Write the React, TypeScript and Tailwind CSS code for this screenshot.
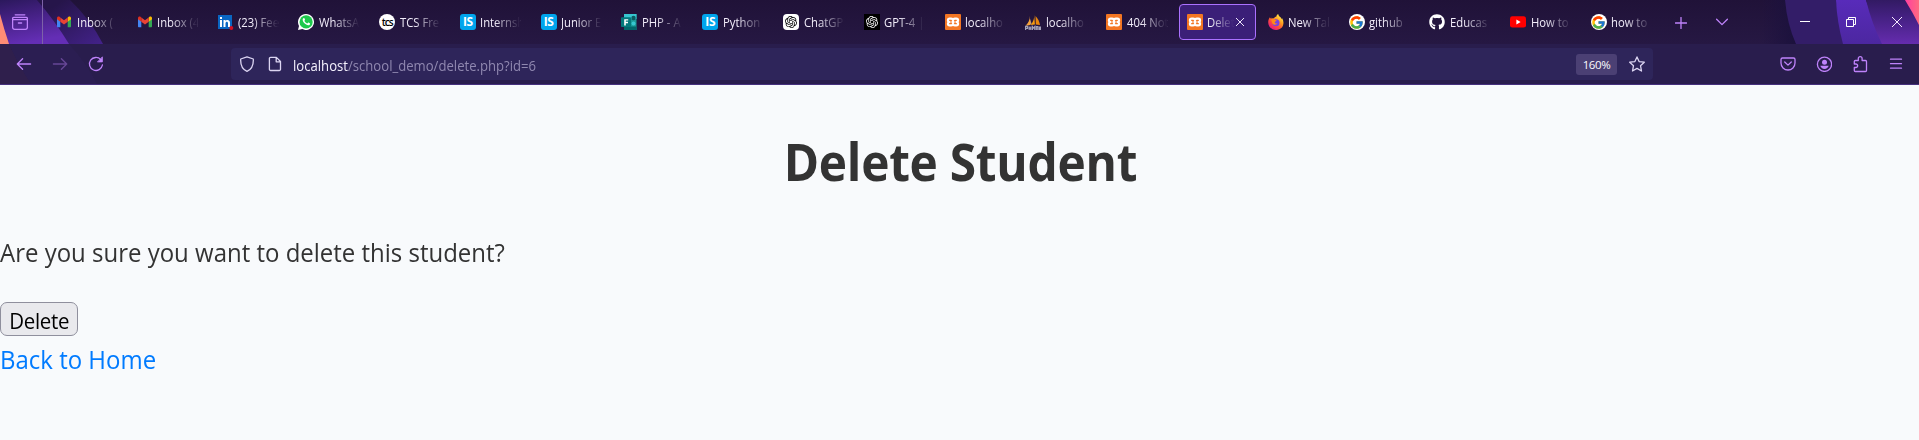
import type { ReactNode } from "react";
import { FcGoogle } from "react-icons/fc";
import { FaGithub } from "react-icons/fa";
import { SiOpenai } from "react-icons/si";

const Gmail = () => (
  <svg viewBox="0 0 16 16" className="size-4">
    <path d="M1 4v8.300c0 .6.4 1 1 1h2.300V6.500L1 4z" fill="#4285f4" />
    <path d="M15 4v8.300c0 .6-.4 1-1 1h-2.300V6.500L15 4z" fill="#34a853" />
    <path d="M11.700 3.500v4.300L15 5.300V4c0-1.300-1.500-2-2.500-1.200z" fill="#fbbc04" />
    <path d="M4.300 3.500 8 6.300l3.700-2.800v4.300L8 10.600 4.300 7.800z" fill="#ea4335" />
    <path d="M1 4v1.300l3.300 2.500V3.500l-.8-.7C2.500 2 1 2.700 1 4z" fill="#e0301e" />
  </svg>
);

const LinkedIn = () => (
  <svg viewBox="0 0 16 16" className="size-4 overflow-visible">
    <path d="M0 1h14v14H0z" fill="#0a66c2" />
    <path d="M2 6h2v7H2zM2 3h2v2H2zM5.500 6h1.900v1c.9-1.600 4.600-1.700 4.600 1.700V13h-2V9.300c0-2.300-2.500-2-2.500 0V13h-2z" fill="#fff" />
    <circle cx="13.300" cy="14" r="2" fill="#d11124" />
  </svg>
);

const WhatsApp = () => (
  <svg viewBox="0 0 16 16" className="size-4">
    <path d="M8 0a8 8 0 1 1-3.700 15.100L0 16l1-4.100A8 8 0 0 1 8 0z" fill="#fff" />
    <circle cx="8.100" cy="7.900" r="6.600" fill="#1ec94c" />
    <path d="M5.500 4.200c.5-.3.900-.1 1.100.4l.4 1c.2.500-.5.900-.6 1.200.6 1.300 1.600 2.200 2.900 2.700.4-.2.800-1.100 1.200-.9l1.300.6c.6.300.2 1.300-.3 1.700-2.500 1.700-7.900-3.500-6.700-5.900.1-.3.400-.6.700-.8z" fill="#fff" />
  </svg>
);

const Tcs = () => (
  <span className="flex size-4 items-center justify-center rounded-full bg-white pb-px text-[10px] font-semibold leading-none tracking-[-1px] text-black">
    tcs
  </span>
);

const Internshala = () => (
  <span className="flex size-4 items-center justify-center rounded-[3px] bg-[#00a5ec] text-[12px] font-bold leading-none tracking-[-0.3px] text-white">
    IS
  </span>
);

const Forms = () => (
  <svg viewBox="0 0 16 16" className="size-4">
    <path d="M3 0h12.500v16H3z" fill="#1b9a98" />
    <path d="M3 0h12.500v5H3z" fill="#37c6d0" />
    <path d="M3 12.500h12.500V16H3z" fill="#02666b" />
    <circle cx="12.500" cy="4" r="2.200" fill="#0b5b60" />
    <circle cx="12.500" cy="9.500" r="2" fill="#37c6d0" />
    <rect y="3.300" width="10" height="9.700" rx=".8" fill="#03787c" />
    <path d="M3.200 5.200h4v1.400H4.800v1.200h2.200v1.400H4.800v2.200H3.200z" fill="#fff" />
  </svg>
);

const ChatGpt = () => (
  <span className="flex size-4 items-center justify-center rounded-[4px] bg-white text-black">
    <SiOpenai size={12} />
  </span>
);

const Gpt4 = () => (
  <span className="flex size-4 items-center justify-center bg-black text-white">
    <SiOpenai size={12} />
  </span>
);

const Xampp = () => (
  <svg viewBox="0 0 16 16" className="size-4">
    <rect width="16" height="16" rx="1" fill="#f37623" />
    <path
      d="M4.600 4.600h1.500Q8 4.600 8 6.200q0-1.600 1.900-1.600h1.500c2.200 0 2.200 3.200 0 3.400 2.200.2 2.200 3.400 0 3.400H9.900Q8 11.400 8 9.800q0 1.600-1.900 1.600H4.600c-2.200 0-2.200-3.200 0-3.400-2.200-.2-2.200-3.400 0-3.400z"
      fill="none"
      stroke="#fff"
      strokeWidth="2.200"
      strokeLinejoin="round"
    />
    <path d="M6.500 8h3" stroke="#fff" strokeWidth="2.200" />
  </svg>
);

const PhpMyAdmin = () => (
  <svg viewBox="0 0 16 16" className="size-4">
    <path d="M4.800 2C4.900 6 3.500 9 .6 11.700l4.700-.8z" fill="#f6a13a" />
    <path d="M9.200.5c.3 4-.9 7.400-3.500 10.500l4.200-.4z" fill="#f89c0e" />
    <path d="M10.500 2c2.400 2.300 3.900 5.500 4.500 9l-4.200-.4z" fill="#e8860c" />
    <path d="M5.300 4.500v6.200l1.100-1z" fill="#ffd08a" />
    <path d="M.6 15.900v-3.500h2v2H1M4.200 16v-3.600m0 1.800h1.600m0-1.800V16M7.400 16v-3.500l1.200 1.600 1.200-1.600V16M11.300 16v-3.400h1.500V16m1.500-3.500V16h1.200v-3.400" fill="none" stroke="#a3a1b8" strokeWidth="1.200" />
  </svg>
);

const Firefox = () => (
  <svg viewBox="0 0 16 16" className="size-4">
    <defs>
      <linearGradient id="fx" x1=".85" y1=".1" x2=".2" y2=".95">
        <stop offset="0" stopColor="#fff44f" />
        <stop offset=".35" stopColor="#ff9a1f" />
        <stop offset=".65" stopColor="#ff4a3a" />
        <stop offset="1" stopColor="#e31587" />
      </linearGradient>
    </defs>
    <path d="M10.200 0c.2 1.300 1 2.200 2 3 .8.800 1.300 1.400 1.600 2.200l.4-1c2.800 4.700 1 11.700-6.100 11.700C3.500 15.900.2 12.600.2 8.300c0-2 .7-3.700 1.800-5l.2 1.500.9-1.300.5 1.200c.7-.4 1.500-.5 2.400-.4C6.600 3.200 7.700 2.600 8.400 2.500c.1-1 .8-1.900 1.800-2.500z" fill="url(#fx)" />
    <circle cx="8" cy="8.700" r="3.500" fill="#7542e5" />
    <path d="M3.200 5.500c1.600-1 3.300-.6 4 .6l1.500.3c.2.700-1.700 1-2 1.800.1 1 1.500 1.700 2.800 1.100-.7 1.900-4.700 2.200-5.400-.6z" fill="#ff8a16" />
  </svg>
);

const Google = () => (
  <span className="flex size-4 items-center justify-center rounded-full bg-white">
    <FcGoogle size={15} />
  </span>
);

const YouTube = () => (
  <svg viewBox="0 0 16 16" className="size-4">
    <rect y="2.300" width="16" height="11.300" rx="2.400" fill="#f00" />
    <path d="m6.400 5.600 4.200 2.400-4.200 2.400z" fill="#fff" />
  </svg>
);

type Tab = { icon: ReactNode; title: string; active?: boolean };

const tabs: Tab[] = [
  { icon: <Gmail />, title: "Inbox (" },
  { icon: <Gmail />, title: "Inbox (4" },
  { icon: <LinkedIn />, title: "(23) Fee" },
  { icon: <WhatsApp />, title: "WhatsA" },
  { icon: <Tcs />, title: "TCS Fre" },
  { icon: <Internshala />, title: "Internsh" },
  { icon: <Internshala />, title: "Junior E" },
  { icon: <Forms />, title: "PHP - A" },
  { icon: <Internshala />, title: "Python" },
  { icon: <ChatGpt />, title: "ChatGP" },
  { icon: <Gpt4 />, title: "GPT-4 |" },
  { icon: <Xampp />, title: "localho" },
  { icon: <PhpMyAdmin />, title: "localho" },
  { icon: <Xampp />, title: "404 Not" },
  { icon: <Xampp />, title: "Delet", active: true },
  { icon: <Firefox />, title: "New Tab" },
  { icon: <Google />, title: "github" },
  { icon: <FaGithub size={16} color="#fff" />, title: "Educas" },
  { icon: <YouTube />, title: "How to" },
  { icon: <Google />, title: "how to" },
];

function ThemeArt() {
  return (
    <svg className="absolute inset-0" width="1919" height="84" viewBox="0 0 1919 84">
      <defs>
        <linearGradient id="bandA" x1="0" y1="0" x2=".3" y2="1">
          <stop offset="0" stopColor="#2b185c" />
          <stop offset=".4" stopColor="#432081" />
          <stop offset="1" stopColor="#642eb5" />
        </linearGradient>
        <linearGradient id="bandB" x1="0" y1="0" x2="1" y2="1">
          <stop offset=".2" stopColor="#26154a" />
          <stop offset="1" stopColor="#43228a" />
        </linearGradient>
        <linearGradient id="bandC" x1="0" y1="0" x2="0" y2="1">
          <stop offset="0" stopColor="#321a63" />
          <stop offset=".4" stopColor="#452183" />
          <stop offset="1" stopColor="#652cae" />
        </linearGradient>
        <linearGradient id="bandD" x1="0" y1="0" x2="0" y2="1">
          <stop offset="0" stopColor="#582bba" />
          <stop offset="1" stopColor="#4c27a0" />
        </linearGradient>
        <linearGradient id="shade" x1="0" y1="0" x2="1" y2="0">
          <stop offset="0" stopColor="#1c1140" stopOpacity="0" />
          <stop offset="1" stopColor="#1b113c" />
        </linearGradient>
        <linearGradient id="pink" x1="0" y1="0" x2="1" y2="0">
          <stop offset="0" stopColor="#ff3fa0" />
          <stop offset="1" stopColor="#ff6a80" />
        </linearGradient>
      </defs>
      <path d="M37 0h33q21 20 33 44H60z" fill="url(#bandB)" />
      <path d="M0 0h37q18 21 32 44H0z" fill="url(#bandA)" />
      <path d="M0 14q4 15 9 30H0z" fill="#ff8c75" />
      <path d="M1762 0h23l11 44h-34z" fill="url(#shade)" />
      <path d="M1785 0h51l8 44h-48q-9-20-11-44z" fill="#331d68" />
      <path d="M1836 0h30l17 44h-40q-6-22-7-44z" fill="url(#bandD)" />
      <path d="M1866 0h53v44h-37q-10-20-16-44z" fill="url(#bandC)" />
      <path d="M1905 0h14v25q-6-12-14-25z" fill="url(#pink)" />
      <path d="M0 44h9q10 22 22 40H0z" fill="#35214b" opacity=".5" />
      <path d="M9 44h60q18 20 28 40H31q-12-18-22-40z" fill="#2e1f58" opacity=".55" />
    </svg>
  );
}

function TabItem({ tab }: { tab: Tab }) {
  return (
    <div className="h-11 w-[80.79px] shrink-0 px-[2px] py-1">
      <div
        className={
          tab.active
            ? "flex h-full items-center rounded-[4px] border border-[#ab71ff] bg-[#3b1f78] pl-[7px]"
            : "flex h-full items-center pl-2"
        }
      >
        <span className="flex size-4 shrink-0 items-center justify-center">{tab.icon}</span>
        <span
          className={
            tab.active
              ? "ml-1 mt-[2px] w-[28px] origin-left scale-x-[.94] whitespace-nowrap mask-r-from-10% text-[12px] text-[#fbfbfe]"
              : "ml-[4.500px] mt-[2px] w-[43px] origin-left scale-x-[.94] whitespace-nowrap mask-r-from-35% text-[12px] text-[#f3eefb]"
          }
        >
          {tab.title}
        </span>
        {tab.active && (
          <svg viewBox="0 0 10 10" className="size-[10px] shrink-0">
            <path d="m1 1 8 8M9 1 1 9" stroke="#eee6fb" strokeWidth="1" />
          </svg>
        )}
      </div>
    </div>
  );
}

const line = { fill: "none", stroke: "#bf83fb", strokeWidth: 1.3, strokeLinecap: "round", strokeLinejoin: "round" } as const;
const pale = { ...line, stroke: "#dcd5f2" };

export default function App() {
  return (
    <div className="h-[440px] w-[1919px] overflow-hidden bg-[#f8fafc] font-['Open_Sans','Noto_Sans',sans-serif]">
      <header className="relative h-[85px] border-b border-[#46307d] bg-[#291d4d]">
        <div className="h-11 bg-linear-to-b from-[#201238] to-[#261843]" />
        <ThemeArt />
        <div className="absolute inset-0 flex flex-col">
          <div className="flex h-11 items-center">
            <div className="flex h-11 w-[43px] items-center border-r border-[#7d62a8] pl-3">
              <svg viewBox="0 0 16 16" className="size-4" {...line}>
                <path d="M3.200.8h9.600M2 3.300h12a1.400 1.400 0 0 1 1.400 1.400v8.600a2 2 0 0 1-2 2H2.600a2 2 0 0 1-2-2V4.700A1.400 1.400 0 0 1 2 3.300zM.8 5.700h14.400M6.400 9h3.200" />
              </svg>
            </div>
            <div className="ml-[3px] flex">
              {tabs.map((tab, i) => (
                <TabItem key={i} tab={tab} />
              ))}
            </div>
            <div className="ml-[13.500px] flex items-center gap-[29px]">
              <svg viewBox="0 0 12 12" className="mt-px size-3" {...line}>
                <path d="M6 .5v11M.5 6h11" />
              </svg>
              <svg viewBox="0 0 12 8" className="h-2 w-3" {...line}>
                <path d="m.6 1.200 5.400 5.400 5.400-5.400" />
              </svg>
            </div>
            <div className="ml-auto -mr-px flex">
              <span className="flex h-11 w-[46px] items-center justify-center">
                <svg viewBox="0 0 10 10" className="size-[10px]"><path d="M0 4.500h10" stroke="#fff" /></svg>
              </span>
              <span className="flex h-11 w-[46px] items-center justify-center">
                <svg viewBox="0 0 10 10" className="size-[10px]"><path d="M.5 2.500h7v7h-7zM2.500 2.500v-2h7v7h-2" stroke="#fff" fill="none" /></svg>
              </span>
              <span className="flex h-11 w-[46px] items-center justify-center">
                <svg viewBox="0 0 10 10" className="size-[10px]"><path d="m0 0 10 10M10 0 0 10" stroke="#f6eaff" /></svg>
              </span>
            </div>
          </div>
          <div className="flex h-10 items-center">
            <div className="flex w-[231px] gap-5 pl-4">
              <svg viewBox="0 0 16 16" className="size-4" {...line}>
                <path d="M14.600 8H1.500M6.600 2.700 1.300 8l5.300 5.300" />
              </svg>
              <svg viewBox="0 0 16 16" className="size-4 opacity-40" {...line}>
                <path d="M1.400 8h13.100M9.400 2.700 14.700 8l-5.300 5.300" />
              </svg>
              <svg viewBox="0 0 16 16" className="size-4" {...line}>
                <path d="M14.400 9A6.500 6.500 0 1 1 12.800 3.600" />
                <path d="M14.400 1.200v4.700H9.800z" fill="#bf83fb" strokeWidth=".8" />
              </svg>
            </div>
            <div className="flex h-8 w-[1422px] items-center rounded-[4px] bg-[#2e255a] pl-2">
              <svg viewBox="0 0 16 16" className="size-4" {...pale}>
                <path d="M8 .8 14.300 3c.3 6-1.500 10.300-6.300 12.300C3.200 13.300 1.400 9 1.700 3z" />
              </svg>
              <svg viewBox="0 0 16 16" className="ml-3 size-4" {...pale}>
                <path d="M3.600 1.400h5.800L13.500 5.500v7.800a1.200 1.200 0 0 1-1.200 1.200H3.600a1.200 1.200 0 0 1-1.200-1.200V2.600a1.200 1.200 0 0 1 1.200-1.200zM9.200 1.600v4.200h4.200" />
              </svg>
              <span className="ml-[10px] mt-[2px] origin-left scale-x-[.937] whitespace-nowrap text-[14px] text-[#9088b0]">
                <span className="text-[#f4f1fd]">localhost</span>/school_demo/delete.php?id=6
              </span>
              <span className="ml-auto flex h-[21px] w-[41px] items-center justify-center rounded-[3px] bg-[#4b4074] pt-px text-[11.500px] tracking-[-0.4px] text-[#fbfbfe]">
                160%
              </span>
              <svg viewBox="0 0 16 16" className="ml-3 mr-2 size-4" {...pale}>
                <path d="m8 .9 2.100 4.700 5.200.6-3.800 3.500 1 5.300L8 12.400 3.500 15l1-5.300L.7 6.200l5.200-.6z" />
              </svg>
            </div>
            <div className="ml-auto mr-[15px] flex gap-5">
              <svg viewBox="0 0 16 16" className="size-4" {...line}>
                <path d="M2.500 2h11a1.500 1.500 0 0 1 1.500 1.500V7A7 7 0 0 1 1 7V3.500A1.500 1.500 0 0 1 2.500 2zM4.700 6 8 9.100 11.300 6" />
              </svg>
              <svg viewBox="0 0 16 16" className="size-4" {...line}>
                <circle cx="8.500" cy="8.300" r="7.100" />
                <circle cx="8.500" cy="6.300" r="2.500" fill="#bf83fb" stroke="none" />
                <path d="M4.300 9.800h8.400a4.400 4.400 0 0 1-8.400 0z" fill="#bf83fb" stroke="none" />
              </svg>
              <svg viewBox="0 0 16 16" className="size-4 overflow-visible" {...line}>
                <path d="M2.300 8V5.500q0-1 1-1h3V2.500a1.900 1.900 0 0 1 3.800 0v2h3.400q1 0 1 1v9q0 1-1 1H3.300q-1 0-1-1v-3h1.600a1.700 1.700 0 0 0 0-3.500z" />
              </svg>
              <svg viewBox="0 0 16 16" className="size-4" {...line}>
                <path d="M2.500 3.200h11M2.500 7.700h11M2.500 12.200h11" />
              </svg>
            </div>
          </div>
        </div>
      </header>
      <main className="flex flex-col items-start text-[25.6px] leading-[41px] text-[#333]">
        <h1 className="mt-[35px] w-full scale-x-[.935] pl-[2px] text-center text-[51.2px] font-bold leading-[82px] tracking-[-0.3px]">
          Delete Student
        </h1>
        <p className="mt-[30px] origin-left scale-x-[.937]">Are you sure you want to delete this student?</p>
        <button className="mt-[29px] flex h-[34px] w-[78px] items-center justify-center rounded-[7px] border border-[#8f8f9d] bg-[#e9e9ed] pt-[3px] text-[21.3px] leading-none text-black">
          <span className="scale-x-[.96] tracking-[-0.3px]">Delete</span>
        </button>
        <a className="mt-[2.500px] origin-left scale-x-[.937] text-[#007bff]">Back to Home</a>
      </main>
    </div>
  );
}
